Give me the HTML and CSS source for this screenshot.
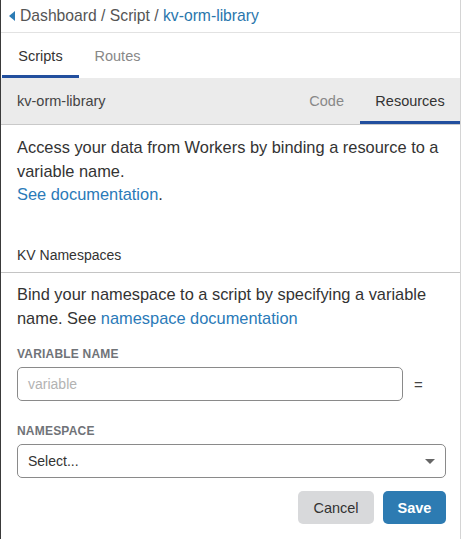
FILE: index.html
```html
<!DOCTYPE html>
<html>
<head>
<meta charset="utf-8">
<link rel="stylesheet" href="styles.css">
</head>
<body>
<div class="panel">
  <div class="crumbs">
    <span class="caret"></span>
    <span>Dashboard / Script / </span><span class="crumb-link">kv-orm-library</span>
  </div>
  <div class="tabs">
    <div class="tab active">Scripts</div>
    <div class="tab">Routes</div>
  </div>
  <div class="subbar">
    <div class="subname">kv-orm-library</div>
    <div class="subtabs">
      <div class="subtab">Code</div>
      <div class="subtab active">Resources</div>
    </div>
  </div>
  <div class="intro">
    Access your data from Workers by binding a resource to a variable name.<br>
    <a class="link">See documentation</a>.
  </div>
  <div class="section-title">KV Namespaces</div>
  <div class="section">
    <p class="desc">Bind your namespace to a script by specifying a variable name. See <a class="link">namespace documentation</a></p>
    <div class="label">VARIABLE NAME</div>
    <div class="var-row">
      <div class="input">variable</div>
      <span class="eq">=</span>
    </div>
    <div class="label">NAMESPACE</div>
    <div class="select">
      <span>Select...</span>
      <span class="arrow"></span>
    </div>
    <div class="actions">
      <button class="btn cancel">Cancel</button>
      <button class="btn save">Save</button>
    </div>
  </div>
</div>
</body>
</html>
```
FILE: styles.css
```css
* { box-sizing: border-box; }
html, body { margin: 0; padding: 0; background: #fff; }
body { font-family: "Liberation Sans", Arial, sans-serif; color: #333; }
.panel {
  width: 461px;
  height: 539px;
  border-left: 1px solid #3a3a3a;
  border-right: 1px solid #d4d4d4;
  display: flex;
  flex-direction: column;
}
.crumbs {
  height: 33px;
  border-bottom: 1px solid #e2e2e2;
  display: flex;
  align-items: center;
  padding-left: 8px;
  font-size: 15.7px;
  color: #555;
  white-space: pre;
}
.caret {
  width: 0; height: 0;
  border-top: 5px solid transparent;
  border-bottom: 5px solid transparent;
  border-right: 6px solid #2c7cb5;
  margin-right: 5px;
}
.crumb-link { color: #2a76ac; }
.tabs {
  height: 45px;
  display: flex;
  padding-left: 1px;
}
.tab {
  width: 77px;
  display: flex;
  align-items: center;
  justify-content: center;
  font-size: 14.5px;
  color: #888;
  border-bottom: 3px solid transparent;
  padding-top: 3px;
}
.tab.active { color: #333; border-bottom-color: #224f9e; }
.subbar {
  height: 47px;
  background: #ebebeb;
  border-bottom: 1px solid #c9c9c9;
  display: flex;
  justify-content: space-between;
  align-items: stretch;
}
.subname {
  display: flex;
  align-items: center;
  padding-left: 16px;
  font-size: 14.5px;
  color: #444;
}
.subtabs { display: flex; }
.subtab {
  display: flex;
  align-items: center;
  justify-content: center;
  font-size: 14.5px;
  color: #888;
  padding: 3px 16px 0 16px;
  border-bottom: 3px solid transparent;
}
.subtab.active { color: #333; border-bottom-color: #224f9e; width: 100px; }
.intro {
  padding: 11px 16px 0 16px;
  font-size: 16.4px;
  line-height: 23.5px;
  height: 111px;
}
.link { color: #2a7ab8; text-decoration: none; }
.section-title {
  padding: 0 16px;
  height: 37px;
  font-size: 14px;
  line-height: 16px;
  padding-top: 11px;
  border-bottom: 1px solid #c4c4c4;
}
.section { padding: 0 16px; }
.desc {
  margin: 10px 0 0 0;
  font-size: 16.4px;
  line-height: 23.5px;
}
.label {
  font-size: 12px;
  font-weight: bold;
  color: #707378;
  letter-spacing: 0.2px;
  margin-top: 17px;
  line-height: 14px;
}
.var-row {
  display: flex;
  align-items: center;
  margin-top: 6px;
}
.input {
  width: 386px;
  height: 34px;
  border: 1px solid #8a8a8a;
  border-radius: 5px;
  padding-left: 10px;
  display: flex;
  align-items: center;
  font-size: 14px;
  color: #b3b3b3;
}
.eq { margin-left: 11px; font-size: 15px; color: #444; }
.var-row + .label { margin-top: 23px; }
.select {
  margin-top: 6px;
  width: 429px;
  height: 34px;
  border: 1px solid #8a8a8a;
  border-radius: 5px;
  padding: 0 10px 0 10px;
  display: flex;
  align-items: center;
  justify-content: space-between;
  font-size: 14px;
  color: #333;
}
.arrow {
  width: 0; height: 0;
  border-left: 5px solid transparent;
  border-right: 5px solid transparent;
  border-top: 5px solid #666;
}
.actions {
  margin-top: 13px;
  width: 429px;
  display: flex;
  justify-content: flex-end;
  gap: 9px;
}
.btn {
  height: 33px;
  border: none;
  border-radius: 5px;
  font-family: "Liberation Sans", Arial, sans-serif;
  font-size: 14.5px;
  padding: 0;
}
.cancel { width: 76px; background: #d8d9db; color: #333; }
.save { width: 63px; background: #2d7bb2; color: #fff; font-weight: bold; }
```
